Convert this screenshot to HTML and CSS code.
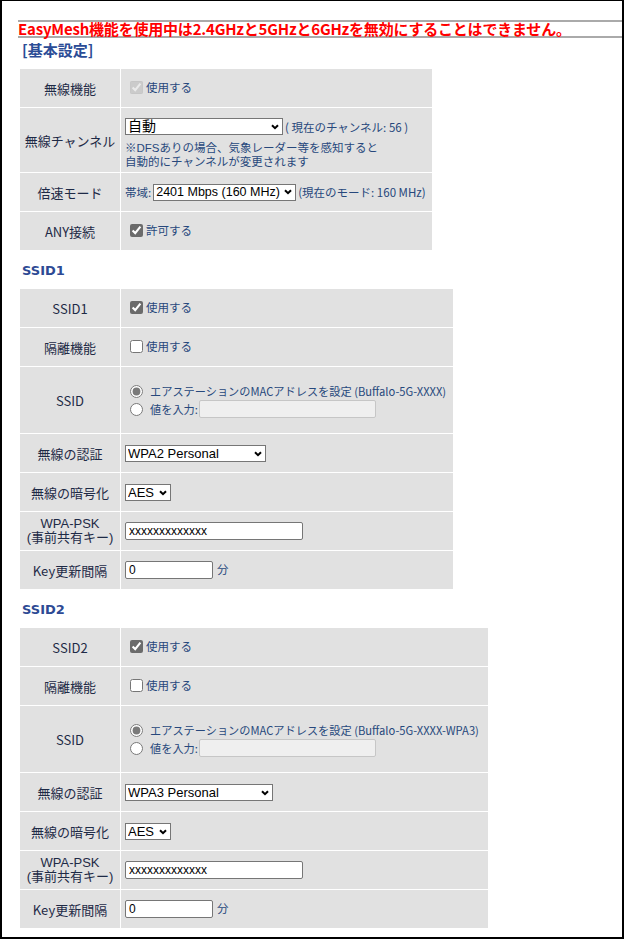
FILE: index.html
```html
<!DOCTYPE html>
<html lang="ja">
<head>
    <meta charset="UTF-8">
    <title>無線設定 (5GHz)</title>
    <link rel="stylesheet" href="styles.css">
</head>
<body>
    <div class="frame">
        <div class="page">
            <p class="warn">EasyMesh機能を使用中は2.4GHzと5GHzと6GHzを無効にすることはできません。</p>

            <h3 class="section">[基本設定]</h3>
            <table class="form basic">
                <tr>
                    <th>無線機能</th>
                    <td><label><input type="checkbox" checked disabled>使用する</label></td>
                </tr>
                <tr class="channel">
                    <th>無線チャンネル</th>
                    <td>
                        <div class="line">
                            <span class="select">
                                <select class="sel-channel"><option>自動</option></select>
                                <svg class="chev" viewBox="0 0 8 6"><path d="M1 1.2l3 3 3-3"/></svg>
                            </span>
                            <span class="info">( 現在のチャンネル: 56 )</span>
                        </div>
                        <div class="note">※DFSありの場合、気象レーダー等を感知すると</div>
                        <div class="note">自動的にチャンネルが変更されます</div>
                    </td>
                </tr>
                <tr>
                    <th>倍速モード</th>
                    <td>
                        <div class="line">
                            <span>帯域:</span>
                            <span class="select">
                                <select class="sel-band"><option>2401 Mbps (160 MHz)</option></select>
                                <svg class="chev" viewBox="0 0 8 6"><path d="M1 1.2l3 3 3-3"/></svg>
                            </span>
                            <span class="info">(現在のモード: 160 MHz)</span>
                        </div>
                    </td>
                </tr>
                <tr>
                    <th>ANY接続</th>
                    <td><label><input type="checkbox" checked>許可する</label></td>
                </tr>
            </table>

            <h4 class="ssid-title">SSID1</h4>
            <table class="form ssid1">
                <tr>
                    <th>SSID1</th>
                    <td><label><input type="checkbox" checked>使用する</label></td>
                </tr>
                <tr>
                    <th>隔離機能</th>
                    <td><label><input type="checkbox">使用する</label></td>
                </tr>
                <tr class="radios">
                    <th>SSID</th>
                    <td>
                        <label class="radio"><input type="radio" name="ssid1" checked>エアステーションのMACアドレスを設定 (Buffalo-5G-XXXX)</label>
                        <label class="radio"><input type="radio" name="ssid1">値を入力:<input type="text" class="txt-ssid" disabled></label>
                    </td>
                </tr>
                <tr>
                    <th>無線の認証</th>
                    <td>
                        <span class="select">
                            <select class="sel-auth"><option>WPA2 Personal</option></select>
                            <svg class="chev" viewBox="0 0 8 6"><path d="M1 1.2l3 3 3-3"/></svg>
                        </span>
                    </td>
                </tr>
                <tr>
                    <th>無線の暗号化</th>
                    <td>
                        <span class="select">
                            <select class="sel-enc"><option>AES</option></select>
                            <svg class="chev" viewBox="0 0 8 6"><path d="M1 1.2l3 3 3-3"/></svg>
                        </span>
                    </td>
                </tr>
                <tr>
                    <th class="two"><span>WPA-PSK</span><span>(事前共有キー)</span></th>
                    <td><input type="text" class="txt-psk" value="xxxxxxxxxxxxx"></td>
                </tr>
                <tr>
                    <th>Key更新間隔</th>
                    <td><input type="text" class="txt-key" value="0"><span class="unit">分</span></td>
                </tr>
            </table>

            <h4 class="ssid-title">SSID2</h4>
            <table class="form ssid2">
                <tr>
                    <th>SSID2</th>
                    <td><label><input type="checkbox" checked>使用する</label></td>
                </tr>
                <tr>
                    <th>隔離機能</th>
                    <td><label><input type="checkbox">使用する</label></td>
                </tr>
                <tr class="radios">
                    <th>SSID</th>
                    <td>
                        <label class="radio"><input type="radio" name="ssid2" checked>エアステーションのMACアドレスを設定 (Buffalo-5G-XXXX-WPA3)</label>
                        <label class="radio"><input type="radio" name="ssid2">値を入力:<input type="text" class="txt-ssid" disabled></label>
                    </td>
                </tr>
                <tr>
                    <th>無線の認証</th>
                    <td>
                        <span class="select">
                            <select class="sel-auth wide"><option>WPA3 Personal</option></select>
                            <svg class="chev" viewBox="0 0 8 6"><path d="M1 1.2l3 3 3-3"/></svg>
                        </span>
                    </td>
                </tr>
                <tr>
                    <th>無線の暗号化</th>
                    <td>
                        <span class="select">
                            <select class="sel-enc"><option>AES</option></select>
                            <svg class="chev" viewBox="0 0 8 6"><path d="M1 1.2l3 3 3-3"/></svg>
                        </span>
                    </td>
                </tr>
                <tr>
                    <th class="two"><span>WPA-PSK</span><span>(事前共有キー)</span></th>
                    <td><input type="text" class="txt-psk" value="xxxxxxxxxxxxx"></td>
                </tr>
                <tr>
                    <th>Key更新間隔</th>
                    <td><input type="text" class="txt-key" value="0"><span class="unit">分</span></td>
                </tr>
            </table>
        </div>
    </div>
</body>
</html>
```

FILE: styles.css
```css
body {
    margin: 0;
    background: #fff;
    font-family: "Noto Sans CJK JP", sans-serif;
    font-size: 11.5px;
    color: #27487c;
}

.frame {
    box-sizing: border-box;
    width: 624px;
    height: 939px;
    border: 2px solid #000;
    border-top-width: 1px;
    overflow: hidden;
}

.page {
    padding: 19px 0 0 16px;
}

.warn {
    margin: 0;
    border-top: 2px solid #aaa;
    border-bottom: 2px solid #aaa;
    color: #f00;
    font-size: 15px;
    font-weight: bold;
    line-height: 14px;
    letter-spacing: -0.2px;
    white-space: nowrap;
}

.section {
    margin: 3px 0 9px 4px;
    font-size: 15px;
    line-height: 18px;
    font-weight: bold;
    color: #2b4c96;
}

.ssid-title {
    margin: 11px 0 8px 4px;
    font-family: "DejaVu Sans", sans-serif;
    font-size: 13px;
    line-height: 18px;
    font-weight: bold;
    color: #2d4a94;
}

.form {
    margin-left: 1px;
    border-collapse: collapse;
    table-layout: fixed;
    background: #e1e1e1;
}

.basic { width: 414px; }
.ssid1 { width: 435px; }
.ssid2 { width: 470px; }

.form th,
.form td {
    border: 1px solid #fff;
    height: 38px;
    padding: 0 4px;
    vertical-align: middle;
    white-space: nowrap;
}

.form th {
    width: 92px;
    font-weight: normal;
    font-size: 13px;
    color: #1e2a46;
    text-align: center;
}

.form th.two span {
    display: block;
    font-family: "Liberation Sans", "Noto Sans CJK JP", sans-serif;
    line-height: 14px;
}

.form tr.channel th,
.form tr.channel td {
    height: 51px;
}

.form tr.channel td {
    vertical-align: top;
    padding-top: 10px;
    padding-bottom: 3px;
}

.form tr.radios th,
.form tr.radios td {
    height: 66px;
}

.form td {
    text-align: left;
}

label {
    display: inline-flex;
    align-items: center;
}

input[type=checkbox] {
    width: 13px;
    height: 13px;
    margin: 0 3px 0 5px;
    accent-color: #6b6b6b;
}

.radio {
    display: flex;
    align-items: center;
    height: 18px;
    font-size: 11.2px;
}

input[type=radio] {
    width: 13px;
    height: 13px;
    margin: 0 7px 0 5px;
    accent-color: #7a7a7a;
}

.line {
    display: flex;
    align-items: center;
    gap: 2px;
}

.note {
    font-family: "Liberation Sans", "Noto Sans CJK JP", sans-serif;
    line-height: 14px;
}

.line + .note {
    margin-top: 6px;
}

.select {
    display: inline-flex;
    align-items: center;
    vertical-align: middle;
}

select {
    appearance: none;
    height: 17px;
    padding: 0 14px 0 2px;
    border: 1px solid #767676;
    border-radius: 0;
    background: #fff;
    color: #000;
    font-family: "Liberation Sans", "Noto Sans CJK JP", sans-serif;
    font-size: 13px;
    line-height: 15px;
}

.chev {
    width: 8px;
    height: 6px;
    margin: 0 4px 0 -12px;
    fill: none;
    stroke: #000;
    stroke-width: 2;
    pointer-events: none;
}

.sel-channel { width: 158px; font-size: 14px; }
.sel-band { width: 143px; font-size: 12.5px; padding-right: 11px; }
.sel-auth { width: 141px; }
.sel-auth.wide { width: 148px; }
.sel-enc { width: 46px; }

input[type=text] {
    box-sizing: border-box;
    height: 18px;
    padding: 0 3px;
    border: 1px solid #767676;
    border-radius: 2px;
    background: #fff;
    color: #000;
    font-family: "Liberation Sans", sans-serif;
    font-size: 12px;
}

input[type=text]:disabled {
    background: #efefef;
    border-color: #c6c6c6;
}

.txt-ssid { width: 177px; margin-left: 1px; }
.txt-psk { width: 178px; font-size: 11px; }
.txt-key { width: 88px; }

.unit {
    margin-left: 4px;
}
```
